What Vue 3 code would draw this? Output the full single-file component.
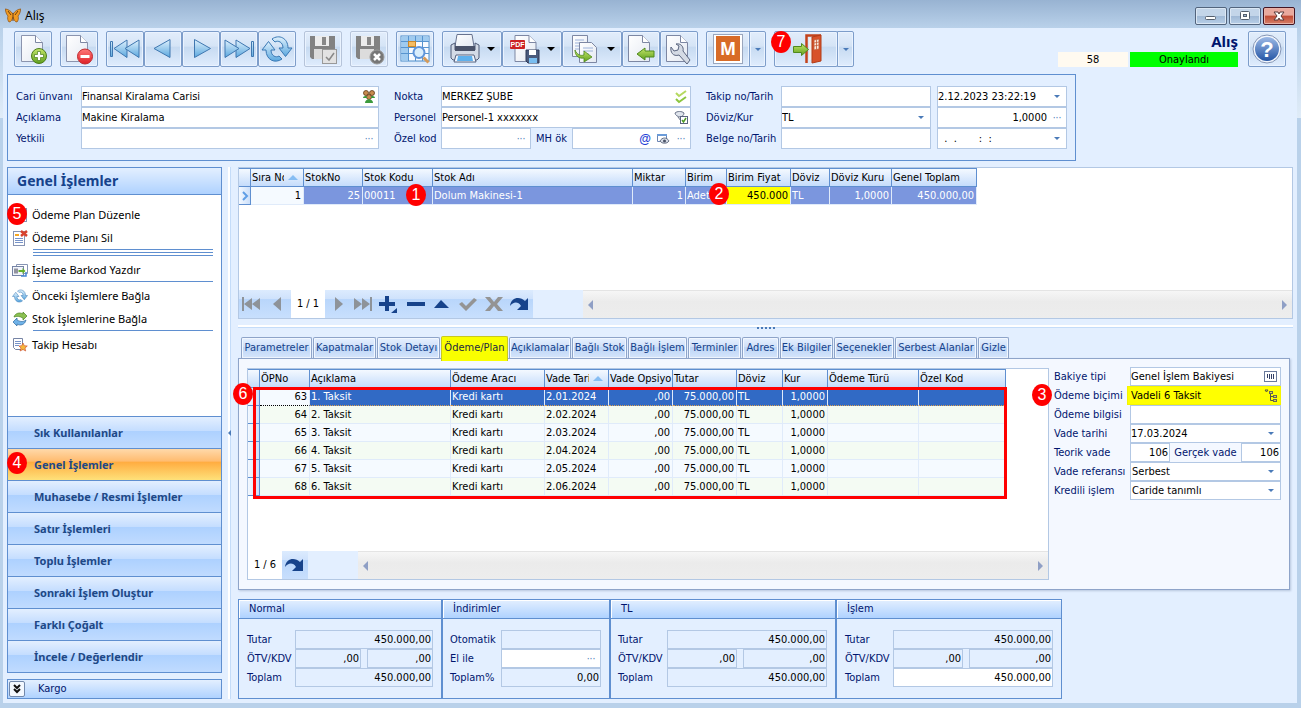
<script setup>
import { ref } from 'vue'

const toolGroups = [
  [{ icon: 'doc-add', label: 'Yeni' }],
  [{ icon: 'doc-del', label: 'Sil' }],
  [
    { icon: 'first', label: 'İlk' },
    { icon: 'prev', label: 'Önceki' },
    { icon: 'next', label: 'Sonraki' },
    { icon: 'last', label: 'Son' },
    { icon: 'refresh', label: 'Yenile' },
  ],
  [{ icon: 'save', label: 'Kaydet', off: true }],
  [{ icon: 'save-x', label: 'İptal', off: true }],
  [{ icon: 'grid', label: 'Liste' }],
  [
    { icon: 'print', label: 'Yazdır', menu: true },
    { icon: 'pdf', label: 'PDF kaydet', menu: true },
    { icon: 'copy', label: 'Kopyala', menu: true },
    { icon: 'doc-back', label: 'Geri al' },
    { icon: 'doc-tool', label: 'Ayarlar' },
  ],
]

const links = [
  { icon: 's-plan', text: 'Ödeme Plan Düzenle', badge: 5 },
  { icon: 's-plandel', text: 'Ödeme Planı Sil', lines: 3 },
  { icon: 's-barcode', text: 'İşleme Barkod Yazdır', lines: 1 },
  { icon: 'refresh', text: 'Önceki İşlemlere Bağla' },
  { icon: 's-green', text: 'Stok İşlemlerine Bağla', lines: 1 },
  { icon: 's-star', text: 'Takip Hesabı' },
]
const sections = [
  'Sık Kullanılanlar', 'Genel İşlemler', 'Muhasebe / Resmi İşlemler', 'Satır İşlemleri',
  'Toplu İşlemler', 'Sonraki İşlem Oluştur', 'Farklı Çoğalt', 'İncele / Değerlendir',
]
const activeSection = ref(1)

const stockCols = [
  ['Sıra No', 53], ['StokNo', 59], ['Stok Kodu', 70], ['Stok Adı', 200], ['Miktar', 53], ['Birim', 41],
  ['Birim Fiyat', 64], ['Döviz', 39], ['Döviz Kuru', 62], ['Genel Toplam', 85],
]
const planCols = [
  ['ÖPNo', 50], ['Açıklama', 141], ['Ödeme Aracı', 94], ['Vade Tarihi', 64], ['Vade Opsiyo', 64],
  ['Tutar', 64], ['Döviz', 46], ['Kur', 45], ['Ödeme Türü', 91], ['Özel Kod', 87],
]
const planRows = [1, 2, 3, 4, 5, 6].map((n) => ({
  no: 62 + n, text: `${n}. Taksit`, date: `2.0${n}.2024`,
}))

const tabs = [
  ['Parametreler', 71], ['Kapatmalar', 63], ['Stok Detayı', 63], ['Ödeme/Plan', 67], ['Açıklamalar', 62],
  ['Bağlı Stok', 55], ['Bağlı İşlem', 59], ['Terminler', 53], ['Adres', 37], ['Ek Bilgiler', 53],
  ['Seçenekler', 60], ['Serbest Alanlar', 82], ['Gizle', 31],
]
const activeTab = ref(3)

const navFirst = ['n-first', 'n-prev']
const navRest = ['n-next', 'n-last', 'n-add', 'n-minus', 'n-up', 'n-check', 'n-x', 'n-redo']

const totals = [
  { key: 'normal', title: 'Normal' },
  { key: 'tl', title: 'TL' },
  { key: 'islem', title: 'İşlem', open: true },
]
</script>

<template>
  <div class="window">
    <svg class="defs" width="0" height="0" aria-hidden="true">
      <defs>
        <linearGradient id="gBlue" x1="0" y1="0" x2="0" y2="1">
          <stop offset="0" stop-color="#dff1fd" /><stop offset="1" stop-color="#5aa7de" />
        </linearGradient>
        <linearGradient id="gGreen" x1="0" y1="0" x2="0" y2="1">
          <stop offset="0" stop-color="#c5e66a" /><stop offset="1" stop-color="#5fa01e" />
        </linearGradient>
        <linearGradient id="gRed" x1="0" y1="0" x2="0" y2="1">
          <stop offset="0" stop-color="#ff7a7a" /><stop offset="1" stop-color="#de1f26" />
        </linearGradient>
        <linearGradient id="gPage" x1="0" y1="0" x2="1" y2="1">
          <stop offset="0" stop-color="#ffffff" /><stop offset="1" stop-color="#e4e9f2" />
        </linearGradient>
        <linearGradient id="gHelp" x1="0" y1="0" x2="0" y2="1">
          <stop offset="0" stop-color="#9cb9e6" /><stop offset="1" stop-color="#2455a4" />
        </linearGradient>
      </defs>
      <symbol id="page" viewBox="0 0 32 32">
        <path d="M5 2h15l7 7v20H5z" fill="url(#gPage)" stroke="#7d87a3" />
        <path d="M20 2v7h7" fill="#fff" stroke="#7d87a3" />
      </symbol>
      <symbol id="doc-add" viewBox="0 0 32 32">
        <path d="M4.500 2.500h14l7 7v19h-21z" fill="url(#gPage)" stroke="#8b94ae" /><path d="M18.500 2.500v7h7" fill="#fff" stroke="#7d87a3" />
        <circle cx="22" cy="23" r="7.500" fill="url(#gGreen)" stroke="#4c7d1b" />
        <path d="M20.500 18.500h3v3h3v3h-3v3h-3v-3h-3v-3h3z" fill="#fff" stroke="#4c7d1b" stroke-width=".7" />
      </symbol>
      <symbol id="doc-del" viewBox="0 0 32 32">
        <path d="M3.500 2.500h14l7 7v19h-21z" fill="url(#gPage)" stroke="#8b94ae" /><path d="M17.500 2.500v7h7" fill="#fff" stroke="#7d87a3" />
        <circle cx="22" cy="23.500" r="7.500" fill="url(#gRed)" stroke="#c0292d" />
        <rect x="17.500" y="22" width="9" height="3" fill="#fff" />
      </symbol>
      <symbol id="first" viewBox="0 0 32 32">
        <g fill="url(#gBlue)" stroke="#3f77b0"><path d="M1.500 8.500v15h2v-15zM18 7L5 15.500l13 9z" /><path d="M30 7L16 15.500l14 9z" /></g>
      </symbol>
      <symbol id="prev" viewBox="0 0 32 32"><path d="M23 6.500v18L7 15.500z" fill="url(#gBlue)" stroke="#3f77b0" /></symbol>
      <symbol id="next" viewBox="0 0 32 32"><path d="M9.500 6.500l16 9-16 9z" fill="url(#gBlue)" stroke="#3f77b0" /></symbol>
      <symbol id="last" viewBox="0 0 32 32">
        <g fill="url(#gBlue)" stroke="#3f77b0"><path d="M28.500 8.500v15h2v-15zM13 7l14 8.500-14 9z" /><path d="M2 7l14 8.500-14 9z" /></g>
      </symbol>
      <symbol id="refresh" viewBox="0 0 32 32">
        <g fill="url(#gBlue)" stroke="#3a78b4" stroke-linejoin="round">
          <path d="M11 6C18 1 27 5 27 15h4l-6.500 8.500L18 15h4c0-6-5-8-8-6z" />
          <path d="M21 26C14 31 5 27 5 17H1l6.500-8.500L14 17h-4c0 6 5 8 8 6z" />
        </g>
      </symbol>
      <symbol id="save" viewBox="0 0 32 32">
        <path d="M3 3h25v23H5l-2-2z" fill="#828282" /><rect x="8" y="3" width="14" height="10" fill="#ececec" /><rect x="15" y="4" width="4" height="8" fill="#888" />
        <rect x="7" y="16" width="16" height="10" fill="#dcdcdc" /><rect x="15.500" y="16.500" width="14" height="14" fill="#e2e2e2" stroke="#999" />
        <path d="M19 24l3 3 5-7" fill="none" stroke="#888" stroke-width="1.500" />
      </symbol>
      <symbol id="save-x" viewBox="0 0 32 32">
        <path d="M3 3h24v23H5l-2-2z" fill="#828282" /><rect x="8" y="3" width="13" height="10" fill="#ececec" /><rect x="14" y="4" width="4" height="8" fill="#888" />
        <rect x="7" y="16" width="14" height="10" fill="#dcdcdc" /><circle cx="24" cy="24" r="7" fill="#777" stroke="#999" />
        <path d="M21 21l6 6M27 21l-6 6" stroke="#fff" stroke-width="2.500" />
      </symbol>
      <symbol id="grid" viewBox="0 0 32 32">
        <rect x="2" y="3" width="28" height="25" fill="#f8fbff" stroke="#4b8bc9" /><path d="M2.500 3.500h27v5h-20v19h-7z" fill="#9fcbf0" />
        <path d="M2 8.500h28M2 14.500h28M2 20.500h28M9.500 3v25M16.500 3v25M23.500 3v25" stroke="#5794cf" fill="none" />
        <rect x="9.500" y="8.500" width="7" height="5" fill="#f6bd62" stroke="#c9872b" />
        <circle cx="20" cy="19.500" r="5.500" fill="#d8edfc" stroke="#5f95da" stroke-width="2" /><path d="M24.500 24.500l5 5" stroke="#d59a58" stroke-width="3" />
      </symbol>
      <symbol id="print" viewBox="0 0 32 32">
        <path d="M8 1.500h15l2 12H6z" fill="url(#gPage)" stroke="#68738f" /><path d="M2 12l4-2v7h20v-7l4 2v13l-2 2H4l-2-2z" fill="#d3dae6" stroke="#4f5a76" />
        <path d="M6 13h20v5H6z" fill="#4a5269" /><path d="M7 22h18l2 7H5z" fill="#f2f7ff" stroke="#56627f" /><path d="M9 23h14l1 5H8z" fill="#5fb0ec" />
      </symbol>
      <symbol id="pdf" viewBox="0 0 32 32">
        <path d="M6 2.500h14l7 7v19H6z" fill="url(#gPage)" stroke="#7d87a3" /><path d="M20 2.500v7h7" fill="#fff" stroke="#7d87a3" />
        <rect x="1" y="7" width="15" height="9" rx="1" fill="#cc2424" />
        <text x="8.500" y="14" font-size="7" font-weight="700" text-anchor="middle" fill="#fff" font-family="Liberation Sans, sans-serif">PDF</text>
        <path d="M17 17h13v13H19l-2-2z" fill="#4a5a7c" stroke="#2e3b59" /><rect x="20" y="17" width="7" height="5" fill="#fff" /><rect x="20" y="25" width="8" height="5" fill="#79bdf0" />
      </symbol>
      <symbol id="copy" viewBox="0 0 32 32">
        <path d="M3.500 2.500h15v21h-15z" fill="url(#gPage)" stroke="#7d87a3" /><path d="M6 7h9M6 10h6M6 13h6M6 16h6" stroke="#9cb2da" />
        <path d="M10.500 9.500h12l5 5v15h-17z" fill="url(#gPage)" stroke="#7d87a3" /><path d="M14 15h10M14 18h10M14 21h6" stroke="#9cb2da" />
        <path d="M6 17c2 5 6 6 9 5v-4l8 6-8 5v-4c-5 1-9-2-9-8z" fill="url(#gGreen)" stroke="#4f8a1d" stroke-width=".8" />
      </symbol>
      <symbol id="doc-back" viewBox="0 0 32 32">
        <path d="M3.500 2.500h14l7 7v19h-21z" fill="url(#gPage)" stroke="#7d87a3" /><path d="M17.500 2.500v7h7" fill="#fff" stroke="#7d87a3" />
        <path d="M12 21l8-6v3h9v6h-9v3z" fill="url(#gGreen)" stroke="#4f8a1d" />
      </symbol>
      <symbol id="doc-tool" viewBox="0 0 32 32">
        <path d="M3.500 2.500h14l7 7v19h-21z" fill="url(#gPage)" stroke="#7d87a3" /><path d="M17.500 2.500v7h7" fill="#fff" stroke="#7d87a3" />
        <path d="M8 14l3 4 4-1 1-4-3-2c5-1 8 3 7 7l7 9-3 4-8-9c-6 2-9-3-8-8z" fill="#d4dae4" stroke="#5a657f" />
      </symbol>
      <symbol id="m-app" viewBox="0 0 32 32">
        <rect x="1.500" y="1.500" width="29" height="29" fill="#fff" stroke="#9aa6bd" /><rect x="4" y="3" width="24" height="25" fill="#d86b27" />
        <text x="16" y="22" font-size="17" font-weight="700" text-anchor="middle" fill="#fff" font-family="Open Sans, sans-serif">M</text>
      </symbol>
      <symbol id="exit" viewBox="0 0 32 32">
        <path d="M16.500 30V2.500H31" fill="none" stroke="#c3431c" stroke-width="2.500" /><path d="M19 5h4v20l-4 3z" fill="#f4efec" />
        <path d="M22 4l9-2v26l-9 2z" fill="#d8522a" stroke="#b23c17" />
        <path d="M24 7l5-1v10l-5 1zM26.500 7v9M24 10l5-1M24 13l5-1" fill="#fbe9dd" stroke="#c25a35" stroke-width=".8" />
        <path d="M3.500 13.500h8v-3l7 6-7 6v-3h-8z" fill="url(#gGreen)" stroke="#4f8a1d" />
      </symbol>
      <symbol id="help" viewBox="0 0 32 32">
        <circle cx="16" cy="16" r="14" fill="#f2f6fd" stroke="#8495b5" /><circle cx="16" cy="16" r="12" fill="url(#gHelp)" />
        <text x="16" y="24" font-size="22" font-weight="700" text-anchor="middle" fill="#fff" font-family="Liberation Sans, sans-serif">?</text>
      </symbol>
      <symbol id="butterfly" viewBox="0 0 16 16">
        <path d="M8 6C6 3 3 1 0 1c1 3 1 5 3 7-1 2 0 5 1 6 2 0 3-2 4-5 1 3 2 5 4 5 1-1 2-4 1-6 2-2 2-4 3-7-3 0-6 2-8 5z" fill="#f09a22" stroke="#8a4d12" stroke-width=".7" />
        <path d="M8 5v8M3 3l3 4M13 3l-3 4" stroke="#6b3f10" fill="none" />
      </symbol>
      <symbol id="people" viewBox="0 0 14 14">
        <g fill="#c98b4e" stroke="#5d3a17" stroke-width=".8"><circle cx="4" cy="3" r="2.500" /><circle cx="10" cy="3" r="2.500" /><circle cx="7" cy="7" r="2.500" /></g>
        <path d="M1 8c0-2 4-3 4 0zM9 8c0-3 4-2 4 0zM3 13c0-5 8-5 8 0z" fill="#3c9a3c" />
      </symbol>
      <symbol id="checks" viewBox="0 0 14 14"><g fill="none" stroke-width="2"><path d="M2 3l3 3 7-5" stroke="#b5d95f" /><path d="M2 9l3 3 7-5" stroke="#8cc63f" /></g></symbol>
      <symbol id="verify" viewBox="0 0 14 14">
        <path d="M1 2c2-2 7-2 9 0 0 2-2 4-4 4S1 4 1 2zM4 6l3 4" fill="#dfe4ec" stroke="#6b7489" /><rect x="6.500" y="5.500" width="7" height="7" fill="#fff" stroke="#5b6580" /><path d="M8 9l1.500 2L12 7" fill="none" stroke="#4c9a24" stroke-width="1.500" />
      </symbol>
      <symbol id="eye" viewBox="0 0 14 14">
        <path d="M1.500 2.500h9v4M1.500 2.500v7h3" fill="#fff" stroke="#6b85b5" /><path d="M1 2h10v2H1z" fill="#6b9bd8" /><path d="M4 9c2-4 7-4 9 0-2 3-7 3-9 0z" fill="#d5dbe6" stroke="#6a7488" /><circle cx="8.500" cy="9" r="1.500" fill="#4a5266" />
      </symbol>
      <symbol id="barbox" viewBox="0 0 14 14"><rect x=".5" y="1.500" width="12" height="10" fill="#fff" stroke="#6a7a9c" /><path d="M3.500 4v4M5.500 4v5M7.500 4v5M9.500 4v5" stroke="#333f66" /></symbol>
      <symbol id="tree" viewBox="0 0 14 14"><path d="M1 1h3l-1.500 2zM6.500 4v7.500h3M6.500 7.500h3" fill="none" stroke="#554" /><g fill="#dcd84a" stroke="#665"><rect x="5.500" y="2.500" width="3" height="2" /><rect x="9.500" y="6.500" width="3" height="2" /><rect x="9.500" y="10.500" width="3" height="2" /></g></symbol>
      <symbol id="s-plan" viewBox="0 0 16 16"><rect x="3.500" y="1.500" width="11" height="13" fill="#fff" stroke="#8794b3" /><path d="M5 5h8M5 8h8M5 11h8" stroke="#7793c9" /></symbol>
      <symbol id="s-plandel" viewBox="0 0 16 16"><rect x="1.500" y="1.500" width="11" height="14" fill="#fff" stroke="#8794b3" /><path d="M3 4h4v2H3z" fill="#f5a623" /><path d="M3 8.500h8M3 10.500h8M3 12.500h8" stroke="#7793c9" /><path d="M9 1l6 5M15 1L9 6" stroke="#d8432f" stroke-width="2.500" /></symbol>
      <symbol id="s-barcode" viewBox="0 0 16 16"><path d="M4.500 2.500h11v9h-11z" fill="#fff" stroke="#8794b3" /><rect x=".5" y="4.500" width="11" height="9" fill="#f2f5fb" stroke="#7684a5" /><path d="M3 6.500v5M5 6.500v5" stroke="#334" /><path d="M6.500 8h4V6l3 3-3 3v-2h-4z" fill="#64b02b" /><path d="M9 14h5v-4" fill="none" stroke="#4685d6" stroke-width="1.500" /></symbol>
      <symbol id="s-green" viewBox="0 0 16 16"><path d="M2 6c1-4 6-5 9-3V1l4 4-4 4V7C7 5 5 5 2 6z" fill="#8cc152" stroke="#4a8420" stroke-width=".7" /><path d="M14 9c-1 5-6 6-9 4v2l-4-4 4-4v2c4 2 6 2 9 0z" fill="#6fb2e8" stroke="#2d689f" stroke-width=".7" /></symbol>
      <symbol id="s-star" viewBox="0 0 16 16"><path d="M1.500 1.500h9v11h-7l-2-2z" fill="#fff" stroke="#7684a5" /><path d="M3 4.500h6M3 6.500h6M3 8.500h4" stroke="#7793c9" /><path d="M11 6l1.300 2.700 3 .3-2.300 2 .7 3-2.700-1.500L8 14l1-3-2-2 2.700-.3z" fill="#f6b73c" stroke="#c7472a" stroke-width=".6" /></symbol>
      <symbol id="n-first" viewBox="0 0 26 26"><path d="M3 6h2v14H3zM13 7v12l-8-6zM21 7v12l-8-6z" fill="#8e9399" /></symbol>
      <symbol id="n-prev" viewBox="0 0 26 26"><path d="M16 6v14l-8-7z" fill="#8e9399" /></symbol>
      <symbol id="n-next" viewBox="0 0 26 26"><path d="M10 6v14l8-7z" fill="#8e9399" /></symbol>
      <symbol id="n-last" viewBox="0 0 26 26"><path d="M3 7v12l8-6zM11 7v12l8-6zM19 6h2v14h-2z" fill="#8e9399" /></symbol>
      <symbol id="n-add" viewBox="0 0 26 26"><path d="M8 5h4v6h6v4h-6v5H8v-5H2v-4h6zM20 17v5h-6z" fill="#17438b" /></symbol>
      <symbol id="n-minus" viewBox="0 0 26 26"><path d="M4 11h18v4H4z" fill="#17438b" /></symbol>
      <symbol id="n-up" viewBox="0 0 26 26"><path d="M5 17l7-8 8 8z" fill="#17438b" /></symbol>
      <symbol id="n-check" viewBox="0 0 26 26"><path d="M4 13l3-2 4 4 8-8 3 2-11 11z" fill="#949494" /></symbol>
      <symbol id="n-x" viewBox="0 0 26 26"><path d="M4 6h5l4 5 4-5h5l-6 7 6 7h-5l-4-5-4 5H4l6-7z" fill="#949494" /></symbol>
      <symbol id="n-redo" viewBox="0 0 26 26"><path d="M3 15C4 6 13 5 18 10l3-3v12H10l4-4c-3-5-8-4-11 0z" fill="#17438b" /></symbol>
    </svg>

    <header class="titlebar">
      <svg class="i16"><use href="#butterfly" /></svg>
      <h1>Alış</h1>
      <div class="winbtns">
        <button aria-label="Küçült"><svg viewBox="0 0 30 16"><rect x="9.500" y="8.500" width="10" height="3" rx="1" fill="#fff" stroke="#555f6d" /></svg></button>
        <button aria-label="Büyüt"><svg viewBox="0 0 30 16"><rect x="10.500" y="3.500" width="9" height="8" rx="1" fill="#fff" stroke="#555f6d" /><rect x="13.500" y="6.500" width="3" height="2" fill="#9fb7d4" stroke="#555f6d" /></svg></button>
        <button class="close" aria-label="Kapat"><svg viewBox="0 0 30 16"><path d="M10 4h4l1 2 1-2h4l-3 4 3 4h-4l-1-2-1 2h-4l3-4z" fill="#fff" stroke="#5b3a3a" /></svg></button>
      </div>
    </header>

    <main class="body">
      <div class="toolbar">
        <div v-for="(g, i) in toolGroups" :key="i" class="group">
          <button v-for="b in g" :key="b.icon" class="tool" :class="{ off: b.off, wide: b.menu }" :aria-label="b.label">
            <svg class="i32"><use :href="'#' + b.icon" /></svg>
            <i v-if="b.menu" class="caret black"></i>
          </button>
        </div>
        <div class="group">
          <button class="tool app" aria-label="Uygulama"><svg class="i32"><use href="#m-app" /></svg></button>
          <button class="tool split" aria-label="Uygulama menüsü"><i class="caret"></i></button>
        </div>
        <div class="group exit">
          <button class="tool door" aria-label="Çıkış"><svg class="i32"><use href="#exit" /></svg></button>
          <button class="tool split" aria-label="Çıkış menüsü"><i class="caret"></i></button>
          <span class="badge b7">7</span>
        </div>
        <div class="status">
          <h2>Alış</h2>
          <div class="chips"><span class="num">58</span><span class="ok">Onaylandı</span></div>
        </div>
        <button class="tool" aria-label="Yardım"><svg class="i32"><use href="#help" /></svg></button>
      </div>

      <form class="top-form" @submit.prevent>
        <div class="col c1">
          <label for="cari">Cari ünvanı</label>
          <div class="field"><input id="cari" value="Finansal Kiralama Carisi" /><svg class="i14"><use href="#people" /></svg></div>
          <label for="acik">Açıklama</label>
          <div class="field"><input id="acik" value="Makine Kiralama" /></div>
          <label for="yetkili">Yetkili</label>
          <div class="field"><input id="yetkili" /><button class="dots" aria-label="Seç">···</button></div>
        </div>
        <div class="col c2">
          <label for="nokta">Nokta</label>
          <div class="field"><input id="nokta" value="MERKEZ ŞUBE" /><svg class="i14"><use href="#checks" /></svg></div>
          <label for="personel">Personel</label>
          <div class="field"><input id="personel" value="Personel-1 xxxxxxx" /><svg class="i14"><use href="#verify" /></svg></div>
          <label for="ozel">Özel kod</label>
          <div class="pair">
            <div class="field kod"><input id="ozel" /><button class="dots" aria-label="Seç">···</button></div>
            <label for="mh">MH ök</label>
            <div class="field grow"><input id="mh" /><b class="at">@</b><svg class="i14"><use href="#eye" /></svg><button class="dots" aria-label="Seç">···</button></div>
          </div>
        </div>
        <div class="col c3">
          <label for="takip">Takip no/Tarih</label>
          <div class="field"><input id="takip" /></div>
          <div class="field"><input aria-label="Tarih" value="2.12.2023 23:22:19" /><button class="drop" aria-label="Takvim"><i class="caret"></i></button></div>
          <label for="doviz">Döviz/Kur</label>
          <div class="field"><select id="doviz"><option>TL</option></select><i class="caret on"></i></div>
          <div class="field"><input class="r" aria-label="Kur" value="1,0000" /><button class="dots" aria-label="Seç">···</button></div>
          <label for="belge">Belge no/Tarih</label>
          <div class="field"><input id="belge" /></div>
          <div class="field"><input aria-label="Belge tarihi" value="  .  .       :  :" /><button class="drop" aria-label="Takvim"><i class="caret"></i></button></div>
        </div>
      </form>

      <div class="work">
        <aside class="side">
          <h3>Genel İşlemler</h3>
          <ul class="links">
            <li v-for="l in links" :key="l.text">
              <a href="#"><svg class="i16"><use :href="'#' + l.icon" /></svg>{{ l.text }}</a>
              <span v-if="l.badge" class="badge b5">{{ l.badge }}</span>
              <div v-if="l.lines" class="rules"><hr v-for="n in l.lines" :key="n" /></div>
            </li>
          </ul>
          <nav>
            <button v-for="(s, i) in sections" :key="s" :class="{ on: i === activeSection }" @click="activeSection = i">
              {{ s }}<span v-if="i === 1" class="badge b4">4</span>
            </button>
          </nav>
          <div class="cargo">
            <button aria-label="Genişlet"><svg viewBox="0 0 14 14"><path d="M4 3l3 3 3-3M4 7l3 3 3-3" fill="none" stroke="#111" stroke-width="2" /></svg></button>
            <span>Kargo</span>
          </div>
        </aside>

        <div class="vsplit"><i></i></div>

        <section class="content">
          <div class="gridbox stock">
            <div class="rows">
              <table class="data">
                <colgroup><col class="ind" /><col v-for="c in stockCols" :key="c[0]" :style="{ width: c[1] + 'px' }" /></colgroup>
                <thead>
                  <tr><th></th><th v-for="(c, i) in stockCols" :key="c[0]" :class="{ sorted: i === 0 }">{{ c[0] }}</th></tr>
                </thead>
                <tbody>
                  <tr class="current">
                    <td class="mark"><svg viewBox="0 0 8 12"><path d="M2 2l4 4-4 4" fill="none" stroke="#5f9ee6" stroke-width="2" /></svg></td>
                    <td class="r plain">1</td><td class="r">25</td><td>00011</td><td>Dolum Makinesi-1</td><td class="r">1</td><td>Adet</td>
                    <td class="r hot">450.000</td><td>TL</td><td class="r">1,0000</td><td class="r">450.000,00</td>
                  </tr>
                </tbody>
              </table>
              <span class="badge b1">1</span><span class="badge b2">2</span>
            </div>
            <div class="navigator">
              <button v-for="n in navFirst" :key="n" :aria-label="n"><svg><use :href="'#' + n" /></svg></button>
              <span class="pos">1 / 1</span>
              <button v-for="n in navRest" :key="n" :aria-label="n"><svg><use :href="'#' + n" /></svg></button>
              <span class="gap"></span>
              <div class="scroll"><i class="left"></i><i class="right"></i></div>
            </div>
          </div>

          <div class="hsplit"><i v-for="n in 5" :key="n"></i></div>

          <div class="tabs" role="tablist">
            <button v-for="(t, i) in tabs" :key="t[0]" role="tab" :class="{ on: i === activeTab }" :style="{ width: t[1] + 'px' }" @click="activeTab = i">{{ t[0] }}</button>
          </div>
          <div class="page">
            <div class="gridbox plan">
              <div class="rows">
                <table class="data">
                  <colgroup><col class="ind" /><col v-for="c in planCols" :key="c[0]" :style="{ width: c[1] + 'px' }" /></colgroup>
                  <thead>
                    <tr><th></th><th v-for="(c, i) in planCols" :key="c[0]" :class="{ sorted: i === 3 }">{{ c[0] }}</th></tr>
                  </thead>
                  <tbody>
                    <tr v-for="(p, i) in planRows" :key="p.no" :class="{ focus: i === 0 }">
                      <td class="mark"></td>
                      <td class="r plain">{{ p.no }}</td><td>{{ p.text }}</td><td>Kredi kartı</td><td>{{ p.date }}</td><td class="r">,00</td>
                      <td class="r">75.000,00</td><td>TL</td><td class="r">1,0000</td><td></td><td></td>
                    </tr>
                  </tbody>
                </table>
                <div class="frame"></div><span class="badge b6">6</span>
              </div>
              <div class="navigator">
                <span class="pos">1 / 6</span>
                <button aria-label="Yenile"><svg><use href="#n-redo" /></svg></button>
                <span class="gap"></span>
                <div class="scroll"><i class="left"></i><i class="right"></i></div>
              </div>
            </div>
            <form class="pay" @submit.prevent>
              <label for="bakiye">Bakiye tipi</label>
              <div class="field"><input id="bakiye" value="Genel İşlem Bakiyesi" /><svg class="i14"><use href="#barbox" /></svg></div>
              <label for="bicim">Ödeme biçimi<span class="badge b3">3</span></label>
              <div class="field yellow"><input id="bicim" value="Vadeli 6 Taksit" /><svg class="i14"><use href="#tree" /></svg></div>
              <label for="bilgi">Ödeme bilgisi</label>
              <div class="field"><input id="bilgi" /></div>
              <label for="vade">Vade tarihi</label>
              <div class="field"><input id="vade" value="17.03.2024" /><button class="drop" aria-label="Takvim"><i class="caret"></i></button></div>
              <label for="teorik">Teorik vade</label>
              <div class="pair">
                <div class="field day"><input id="teorik" class="r" value="106" /></div>
                <label for="gercek">Gerçek vade</label>
                <div class="field day"><input id="gercek" class="r" value="106" /></div>
              </div>
              <label for="refer">Vade referansı</label>
              <div class="field"><select id="refer"><option>Serbest</option></select><i class="caret on"></i></div>
              <label for="kredi">Kredili işlem</label>
              <div class="field"><select id="kredi"><option>Caride tanımlı</option></select><i class="caret on"></i></div>
            </form>
          </div>

          <div class="totals">
            <template v-for="(t, i) in totals" :key="t.key">
              <fieldset :class="t.key">
                <legend>{{ t.title }}</legend>
                <div class="sum">
                  <label :for="t.key + 'a'">Tutar</label>
                  <div class="field ro"><input :id="t.key + 'a'" class="r" value="450.000,00" readonly /></div>
                  <label :for="t.key + 'b'">ÖTV/KDV</label>
                  <div class="pair tax">
                    <div class="field ro otv"><input :id="t.key + 'b'" class="r" value=",00" readonly /></div>
                    <div class="field ro grow"><input class="r" aria-label="KDV" value=",00" readonly /></div>
                  </div>
                  <label :for="t.key + 'c'">Toplam</label>
                  <div class="field" :class="{ ro: !t.open }"><input :id="t.key + 'c'" class="r" value="450.000,00" /></div>
                </div>
              </fieldset>
              <fieldset v-if="i === 0" class="disc">
                <legend>İndirimler</legend>
                <div class="sum">
                  <label for="oto">Otomatik</label><div class="field ro"><input id="oto" readonly /></div>
                  <label for="elile">El ile</label><div class="field"><input id="elile" /><button class="dots" aria-label="Seç">···</button></div>
                  <label for="yuzde">Toplam%</label><div class="field ro"><input id="yuzde" class="r" value="0,00" readonly /></div>
                </div>
              </fieldset>
            </template>
          </div>
        </section>
      </div>
    </main>
  </div>
</template>

<style>
html, body { margin: 0; }
</style>

<style scoped>
.window {
  --line: #5f8fd0;
  --soft: #b3c8e4;
  --navy: #00156e;
  display: flex; flex-direction: column; min-height: 100vh; box-sizing: border-box; padding: 0 4px 5px 3px;
  background: linear-gradient(#b9d1ea 28px, #e0ecf8 118px, #b9d1ea 118px);
  font: 11px/14px "DejaVu Sans Condensed", "Noto Sans", sans-serif; color: #000;
}
.window *, .window *::after, .window *::before { box-sizing: border-box; }
.defs { position: absolute; }
button, input, select { font: inherit; color: inherit; margin: 0; padding: 0; border: 0; background: none; border-radius: 0; }
h1, h2, h3, ul { margin: 0; padding: 0; list-style: none; }
.i16 { width: 16px; height: 16px; flex: none; }
.i14 { width: 14px; height: 14px; flex: none; margin-right: 2px; }
.i32 { width: 32px; height: 32px; flex: none; }

.titlebar { display: flex; align-items: center; gap: 4px; height: 28px; margin: 0 -4px 0 -3px; padding: 4px 6px 0 5px; background: linear-gradient(#98b3d2, #b9d1ea); }
.titlebar h1 { flex: 1; font: 12px/18px "Noto Sans", sans-serif; }
.winbtns { display: flex; gap: 2px; }
.winbtns button { width: 32px; height: 18px; border: 1px solid #52647d; border-radius: 2px; background: linear-gradient(#c3d5e9 50%, #9fb8d5 50%, #b8cfe8); box-shadow: inset 0 0 0 1px #dbe7f4; }
.winbtns svg { display: block; width: 30px; height: 16px; }
.winbtns .close { border-color: #431422; background: linear-gradient(#e9a99d 45%, #c04a33 50%, #d6806a); box-shadow: inset 0 0 0 1px #e8b1a6; }

.body { flex: 1; display: flex; flex-direction: column; padding: 3px 4px 4px; background: #e3efff; }
.toolbar { display: flex; gap: 8px; padding: 0 7px; margin-bottom: 7px; }
.group { display: flex; position: relative; }
.tool { display: flex; align-items: center; justify-content: center; width: 38px; height: 36px; border: 1px solid #7d9dca; border-radius: 2px; background: linear-gradient(#e2edfb 0%, #d5e4f6 42%, #c6daf1 44%, #dfecfd 100%); box-shadow: inset 0 0 0 1px #eaf3ff; }
.tool.off { border-color: #b6c4da; }
.tool.wide { width: 60px; gap: 6px; }
.tool.app { width: 44px; border-radius: 2px 0 0 2px; }
.tool.split { width: 17px; margin-left: -1px; border-radius: 0 2px 2px 0; }
.tool.door { width: 64px; }
.caret { display: block; flex: none; width: 0; height: 0; border: 3px solid transparent; border-top-color: #4a7ab8; border-bottom: 0; }
.caret.black { border-width: 4px 4px 0; border-top-color: #000; }
.status { margin-left: auto; width: 180px; text-align: right; }
.status h2 { font: bold 15px/21px "Noto Sans", sans-serif; color: var(--navy); }
.status + .tool { margin-left: 2px; }
.chips { display: flex; gap: 2px; text-align: center; line-height: 16px; }
.num { width: 70px; height: 15px; background: #fffaf0; }
.ok { flex: 1; height: 15px; background: #0f0; }

.top-form { display: flex; gap: 15px; align-self: flex-start; padding: 11px 8px; border: 1px solid var(--line); }
.col { display: grid; grid-auto-rows: 21px; align-items: stretch; }
.c1 { grid-template-columns: 65px 298px; }
.c2 { grid-template-columns: 47px 250px; }
.c3 { grid-template-columns: 75px 150px 136px; }
.c3 .field:nth-child(3n) { margin-left: 6px; }
label { color: var(--navy); align-self: center; white-space: nowrap; }
.field { position: relative; display: flex; align-items: center; min-width: 0; border: 1px solid var(--soft); background: #fff; }
.field.ro { background: #e3efff; }
.field input { flex: 1; min-width: 0; width: 0; height: 100%; white-space: pre; }
.field select { flex: 1; min-width: 0; appearance: none; height: 100%; }
.r { text-align: right; }
.field input.r { padding-right: 1px; }
.pair { display: flex; min-width: 0; }
.pair label { padding: 0 5px; }
.grow { flex: 1; }
.kod { width: 90px; }
.dots { width: 18px; line-height: 12px; color: #4a7ab8; font-size: 10px; }
.drop { width: 18px; height: 100%; display: flex; align-items: center; justify-content: center; }
.caret.on { margin-right: 6px; }
.at { color: #1f3fd6; margin-right: 5px; font: bold 12px/14px "Liberation Sans", sans-serif; }

.work { flex: 1; display: flex; margin-top: 6px; min-height: 0; }
.side { display: flex; flex-direction: column; width: 215px; flex: none; }
.side h3 { height: 28px; padding-left: 9px; border: 1px solid var(--line); background: linear-gradient(#e3efff, #afd2ff); font: bold 14px/26px "Noto Sans", sans-serif; color: #15428b; }
.links { flex: 1; padding-top: 8px; border: solid var(--line); border-width: 0 1px; background: #fff; }
.links li { position: relative; }
.links a { display: flex; align-items: center; gap: 4px; height: 23px; padding-left: 4px; color: #000; text-decoration: none; font: 11px/23px "Noto Sans", sans-serif; }
.rules { margin: 0 8px 0 25px; }
.rules hr { margin: 0 0 2px; border: 0; border-top: 1px solid var(--line); }
.side nav { display: flex; flex-direction: column; border: solid var(--line); border-width: 0 1px 1px; }
.side nav button { position: relative; height: 32px; padding-left: 26px; border-top: 1px solid var(--line); text-align: left; font: bold 11px/31px "Noto Sans", sans-serif; color: #1e4886; background: linear-gradient(#e3efff, #c4ddff 45%, #add1ff 46%, #c0dbff); }
.side nav button.on { background: linear-gradient(#ffd9aa, #ffbb6e 40%, #ffab3f 41%, #fee17a); }
.cargo { display: flex; align-items: center; gap: 13px; height: 20px; margin-top: 6px; border: 1px solid var(--line); background: linear-gradient(#e3efff, #afd2ff); color: var(--navy); }
.cargo button { width: 16px; height: 16px; margin-left: 1px; border: 1px solid #7288ab; border-radius: 2px; background: #f3f8ff; }
.cargo svg { display: block; }

.vsplit { width: 16px; flex: none; display: flex; align-items: center; background: linear-gradient(90deg, transparent 6px, #fff 6px 8px, #c4dcf9 8px 9px, transparent 9px); }
.vsplit i { margin-left: 6px; border: 3px solid transparent; border-right: 3px solid #4a7ab8; border-left: 0; }
.content { flex: 1; min-width: 0; display: flex; flex-direction: column; }
.gridbox { display: flex; flex-direction: column; background: #fff; border: 1px solid var(--soft); }
.stock { height: 152px; }
.rows { position: relative; flex: 1; }
.data { table-layout: fixed; width: 0; border-collapse: separate; border-spacing: 0; }
.data .ind { width: 12px; }
.data th, .data td { height: 18px; padding: 0 2px 0 1px; overflow: hidden; white-space: nowrap; line-height: 16px; font-weight: normal; text-align: left; }
.data th { height: 19px; padding-right: 0; border: solid var(--line); border-width: 1px 1px 1px 0; background: linear-gradient(#f4f9ff, #c5dcfb); }
.data td { border-right: 1px solid #e0ebfa; border-bottom: 1px solid #e0ebfa; }
.data td.r { text-align: right; }
.data th.sorted { position: relative; }
.data th.sorted::before { content: ""; position: absolute; right: 0; top: 0; width: 19px; height: 17px; background: linear-gradient(#f4f9ff, #c5dcfb); }
.data th.sorted::after { content: ""; position: absolute; right: 5px; top: 6px; border: solid transparent; border-width: 0 5px 5px; border-bottom-color: #86bdf3; }
.data td.mark { padding: 0; border-color: var(--line); background: linear-gradient(90deg, #f4f9ff, #cbdffa); }
.mark svg { display: block; width: 8px; height: 12px; margin-left: 2px; }
.current td { background: #7b96de; color: #fff; }
.data .current td.plain { background: #f5faff; color: #000; }
.data .current td.hot { background: #ff0; color: #000; }
.plan tbody td { background: #f5faff; }
.plan tbody tr:nth-child(even) td { background: #f4fbf3; }
.plan tbody tr.focus td { background: #316ac5; color: #fff; border-bottom: 1px dotted #d9a052; }
.plan tbody tr.focus td.plain { background: #f5faff; color: #000; border-bottom-color: #000; }
.plan tbody tr td.mark, .plan tbody tr.focus td.mark { background: linear-gradient(90deg, #f4f9ff, #cbdffa); border-bottom: 1px solid var(--line); }

.navigator { display: flex; height: 28px; background: #e3efff; }
.navigator button { width: 26px; height: 28px; background: linear-gradient(#dcebfe, #cfe2fc 32%, #b9d6fb 34%, #c8dffd); }
.navigator svg { display: block; width: 26px; height: 26px; }
.pos { width: 34px; background: #fff; text-align: center; line-height: 28px; }
.gap { width: 50px; }
.scroll { flex: 1; display: flex; align-items: center; justify-content: space-between; padding: 0 5px; border-top: 1px solid #e4e4e4; background: linear-gradient(#f6f6f6, #ebebeb 40%, #ededed); }
.scroll i { border: 5px solid transparent; }
.scroll .left { border-left: 0; border-right-color: #8f9fc5; }
.scroll .right { border-right: 0; border-left-color: #8f9fc5; }

.hsplit { display: flex; justify-content: center; align-items: center; gap: 2px; height: 17px; background: linear-gradient(transparent 6px, #fff 6px 8px, #c4dcf9 8px 9px, transparent 9px); }
.hsplit i { width: 2px; height: 2px; background: #4a7ab8; }
.tabs { display: flex; align-items: flex-end; gap: 1px; height: 22px; padding: 0 3px; }
.tabs button { height: 21px; border: 1px solid #8ea4c9; border-bottom: 0; border-radius: 2px 2px 0 0; color: #15428b; text-align: center; white-space: nowrap; background: linear-gradient(#e6f0ff, #cfe0f8 45%, #bdd5f6 48%, #d5e5fb); box-shadow: inset 0 0 0 1px #f1f7ff; }
.tabs button.on { position: relative; z-index: 1; height: 25px; margin-bottom: -3px; padding-bottom: 3px; background: #f9ff00; border-color: #c8c81e; box-shadow: none; color: #222a40; }
.page { flex: 1; display: flex; gap: 5px; padding: 9px 8px; margin-right: 3px; border: 1px solid #8ea4c9; background: #f4f8ff; box-shadow: 1px 1px 2px #b7c6dd; }
.plan { flex: 1; min-width: 0; }
.frame { position: absolute; left: 5px; top: 18px; width: 754px; height: 112px; border: 3px solid #f00; }
.pay { display: grid; grid-template-columns: 76px 151px; grid-auto-rows: 19px; margin-top: -1px; }
.pay label { position: relative; }
.pay .field select { padding-left: 1px; }
.day { width: 40px; }
.pay .pair label { flex: 1; text-align: center; padding: 0; }
.field.yellow { background: #ff0; border-color: #f4f400; margin-left: -3px; padding-left: 3px; }

.totals { display: flex; margin-top: 9px; }
fieldset { min-width: 0; margin: 0; padding: 0; border: 1px solid var(--line); }
legend { float: left; width: 100%; height: 19px; padding: 0 10px; border-bottom: 1px solid var(--line); box-shadow: inset 1px 1px 0 #fff; background: linear-gradient(#e3efff, #afd2ff); color: var(--navy); line-height: 18px; }
.sum { clear: both; display: grid; grid-template-columns: 48px 1fr; grid-auto-rows: 19px; padding: 11px 8px; }
.normal { width: 204px; }
.disc { width: 168px; }
.disc .sum { grid-template-columns: 51px 1fr; padding-left: 7px; }
.tl, .islem { width: 226px; }
.tl .sum { grid-template-columns: 49px 1fr; padding-left: 7px; }
.tax { gap: 6px; }
.otv { width: 70px; }
.normal .otv { width: 66px; }

.badge { position: absolute; z-index: 3; width: 20px; height: 22px; border-radius: 50%; background: #f00; color: #fff; text-align: center; font: 16px/22px "Liberation Sans", sans-serif; }
.b7 { left: -3px; top: 0; }
.b5 { left: -1px; top: 0; }
.b4 { left: -1px; top: 3px; }
.b1 { left: 167px; top: 16px; }
.b2 { left: 470px; top: 15px; }
.b3 { left: -22px; top: -5px; }
.b6 { left: -15px; top: 14px; }
</style>
